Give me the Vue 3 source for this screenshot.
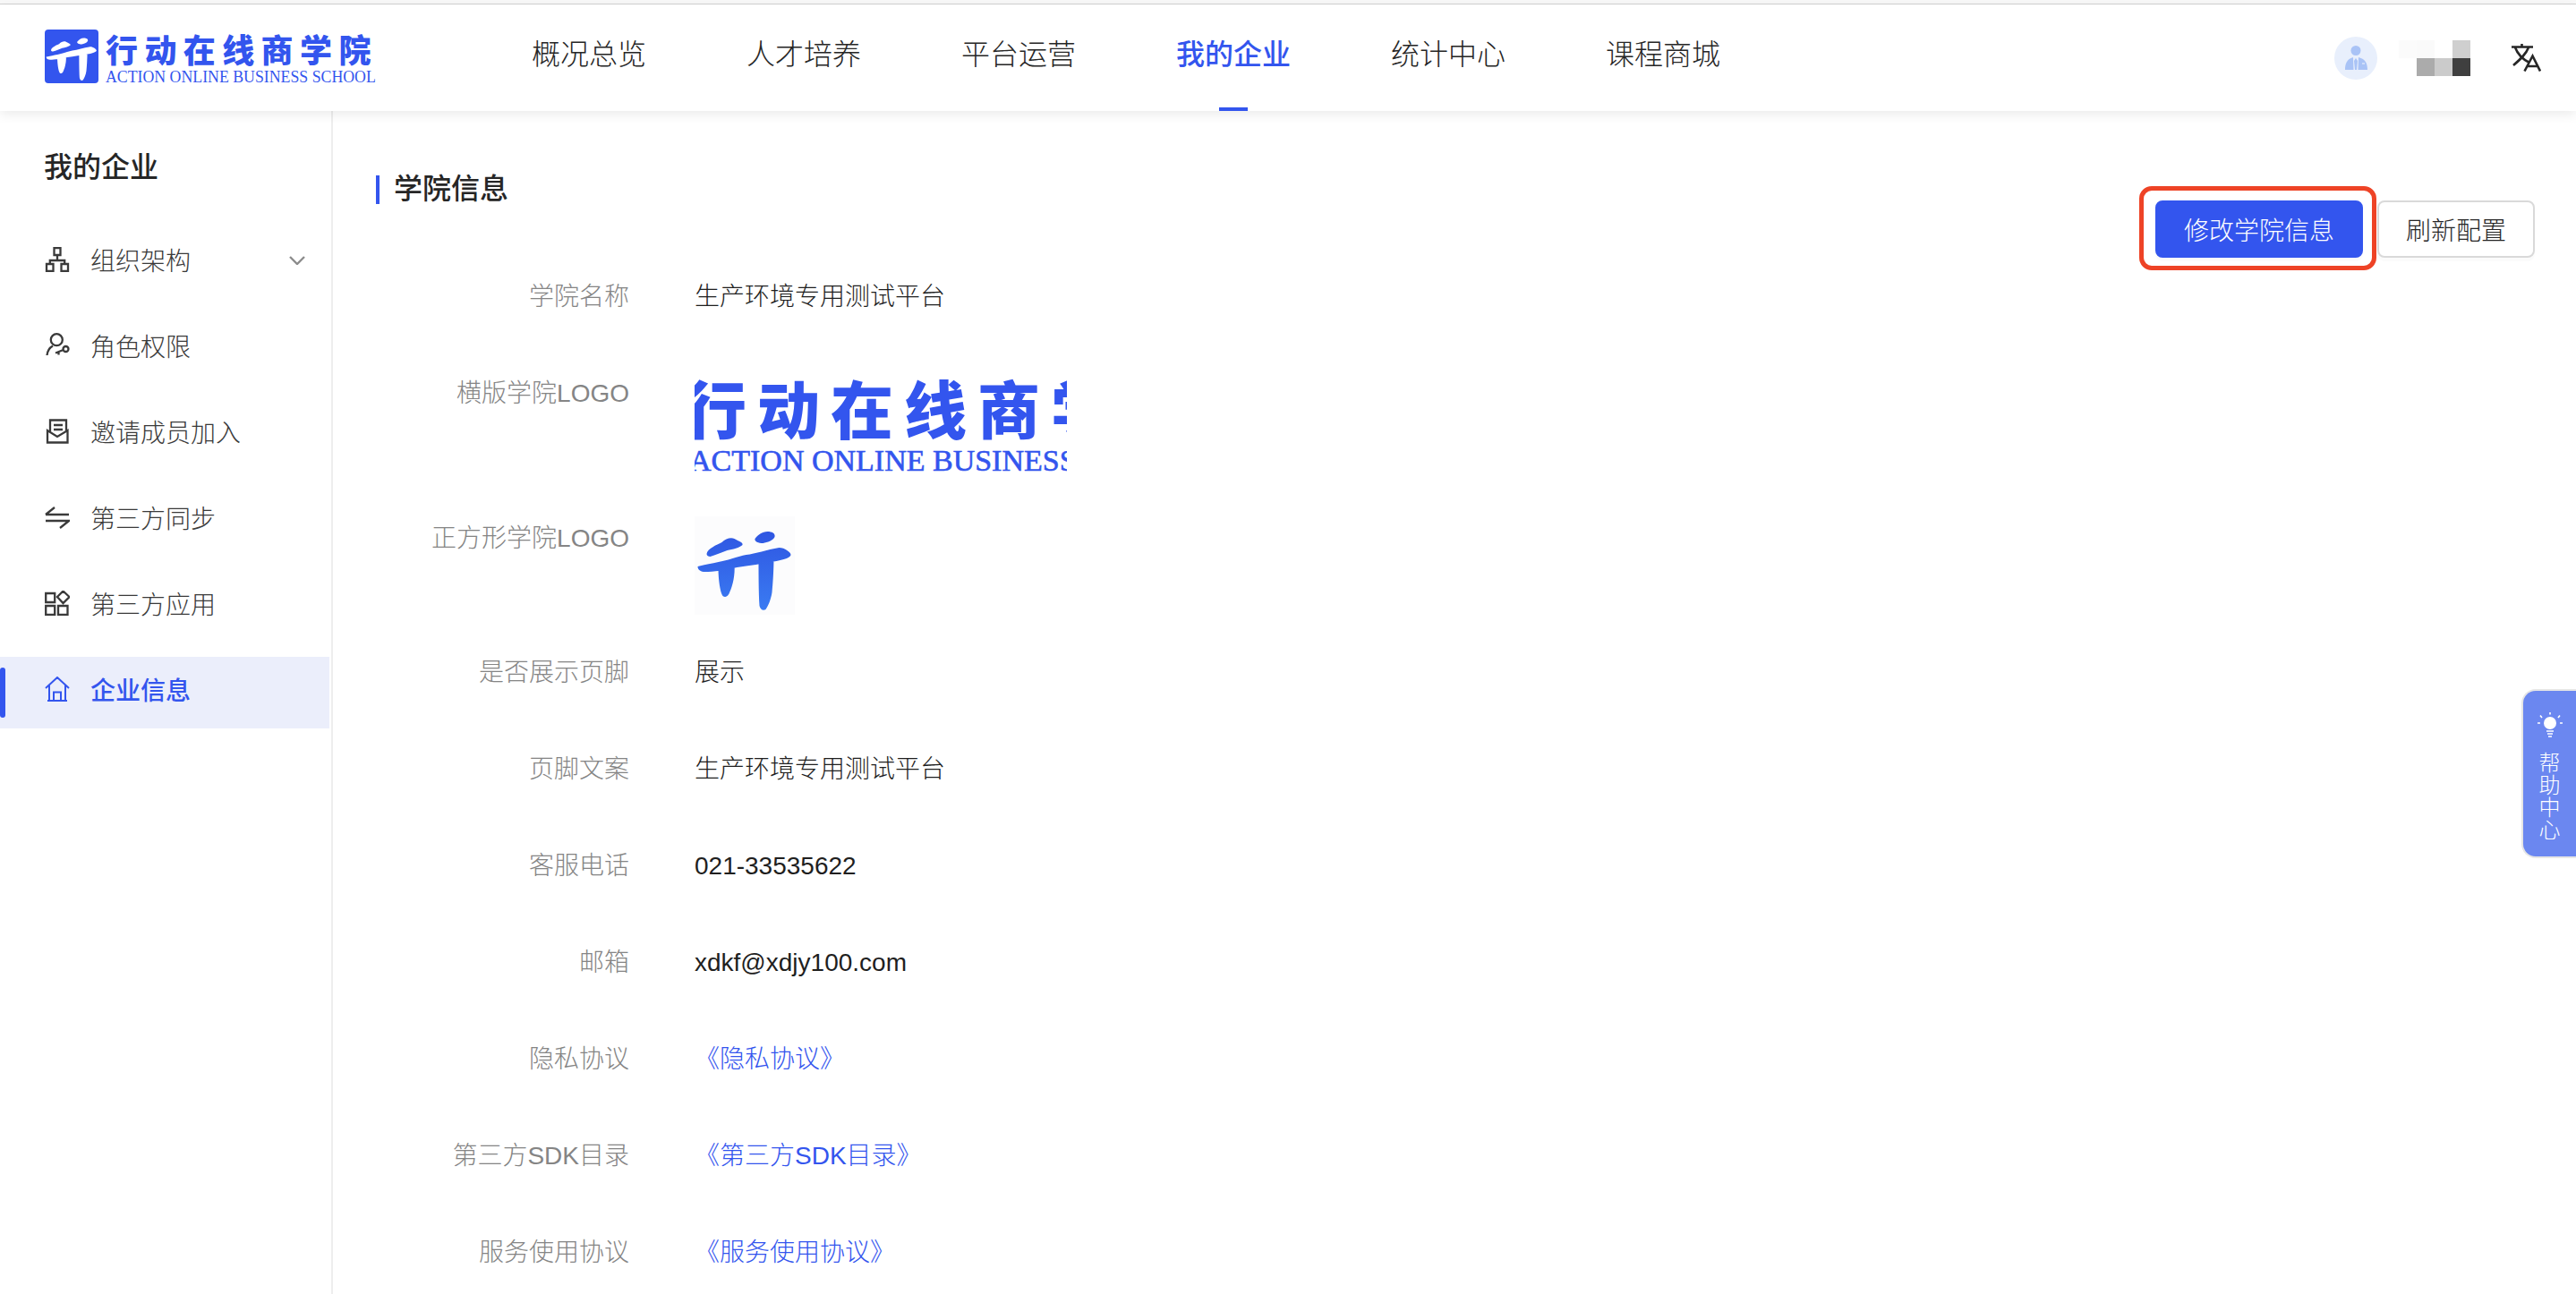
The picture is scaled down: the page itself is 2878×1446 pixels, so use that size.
<template>
  <div class="page">
    <div class="topline"></div>
    <header class="header">
      <div class="brand">
        <div class="brand-mark">
          <svg viewBox="0 0 111 110" class="brand-svg"><path :d="markPath" fill="#fff" /></svg>
        </div>
        <div class="brand-text">
          <div class="brand-cn">行动在线商学院</div>
          <div class="brand-en">ACTION ONLINE BUSINESS SCHOOL</div>
        </div>
      </div>
      <nav class="nav">
        <a v-for="n in navs" :key="n" class="nav-item" :class="{ active: n === '我的企业' }">{{ n }}</a>
      </nav>
      <div class="user">
        <svg class="avatar" viewBox="0 0 48 48">
          <circle cx="24" cy="24" r="24" fill="#e8effc" />
          <circle cx="24" cy="15.5" r="5.5" fill="#a9c3f6" />
          <path d="M12 37C12 30 14 25 21 23L21.5 37ZM37 37C37 30 35 25 27 23L26.5 37ZM24 24L26 27L25 37H23L22 27Z" fill="#a9c3f6" />
          <path d="M31 30H34" stroke="#e8effc" stroke-width="1.2" />
        </svg>
        <div class="blurred">
          <i v-for="(c, i) in cells" :key="i" :style="{ background: c }"></i>
        </div>
        <svg class="translate" viewBox="0 0 34 31" fill="none" stroke="#262626" stroke-width="2.6">
          <path d="M1 3.5H25M12.5 0V3.5M5 4C8 12 13 17 21 21M20 4C17 12 10 18 3 24" />
          <path d="M15.5 30.5L24.5 13.5L33 30.5M18 25H30.5" />
        </svg>
      </div>
    </header>
    <div class="body">
      <aside class="side">
        <h2 class="side-title">我的企业</h2>
        <div v-for="m in menus" :key="m.t" class="menu" :class="{ on: m.on }">
          <svg class="menu-icon" viewBox="0 0 28 28" fill="none" stroke="currentColor" :stroke-width="m.on ? 2 : 2.3"><path :d="m.d" /></svg>
          <span>{{ m.t }}</span>
          <svg v-if="m.arrow" class="chev" viewBox="0 0 18 10" fill="none" stroke="#8c8c8c" stroke-width="2.4"><path d="M1 1L9 9L17 1" /></svg>
        </div>
      </aside>
      <main class="main">
        <div class="head">
          <h1 class="title">学院信息</h1>
          <div class="actions">
            <div class="mark-wrap">
              <button class="btn primary">修改学院信息</button>
              <div class="red-box"></div>
            </div>
            <button class="btn">刷新配置</button>
          </div>
        </div>
        <div class="form">
          <div class="row"><label>学院名称</label><div class="val">生产环境专用测试平台</div></div>
          <div class="row">
            <label>横版学院LOGO</label>
            <div class="logo-wide">
              <div class="wide-cn">行动在线商学院</div>
              <div class="wide-en">ACTION ONLINE BUSINESS SCHOOL</div>
            </div>
          </div>
          <div class="row">
            <label>正方形学院LOGO</label>
            <div class="logo-square">
              <svg viewBox="0 0 111 110" class="square-svg">
                <defs><linearGradient id="mg" x1="0" y1="0" x2="0" y2="1"><stop offset="0" stop-color="#2f56e2" /><stop offset="1" stop-color="#3a7bf2" /></linearGradient></defs>
                <path :d="markPath" fill="url(#mg)" />
              </svg>
            </div>
          </div>
          <div v-for="r in rows" :key="r.l" class="row">
            <label>{{ r.l }}</label>
            <div class="val" :class="{ link: r.link }">{{ r.v }}</div>
          </div>
        </div>
      </main>
    </div>
    <div class="help">
      <svg class="bulb" viewBox="0 0 28 28" fill="none" stroke="#fff" stroke-width="1.6">
        <circle cx="14" cy="12" r="7" fill="#fff" stroke="none" />
        <path d="M14 0V2.5M3 3.5L5 6M25 3.5L23 6M0 12H3M25 12H28M10 21H18M11 24H17M12 27H16" />
      </svg>
      <div class="help-text">帮助中心</div>
    </div>
  </div>
</template>

<script setup>
const markPath =
  'M13 42C14 36 24 32 30 29C34 25 40 23 44 25C49 28 54 29 53 32C50 35 42 37 36 38C30 40 24 43 17 45C15 45 13 44 13 42Z' +
  'M67 25C70 21 75 17 81 17C86 17 90 19 89 23C87 27 81 29 76 30C71 30 66 28 67 25Z' +
  'M3 56C10 54 30 51 42 47C48 45 52 44 57 43C68 42 80 37 94 35C100 35 107 40 107 43C107 46 100 48 91 50C75 53 60 55 47 57C35 60 20 62 11 62C7 62 3 60 3 56Z' +
  'M26 58L44 54C45 65 42 78 39 84C37 90 34 91 31 89C28 85 26 70 26 58Z' +
  'M71 46L88 44C88 60 87 75 86 85C85 92 82 100 79 104C76 106 73 104 72 100C71 85 71 60 71 46Z'

const navs = ['概况总览', '人才培养', '平台运营', '我的企业', '统计中心', '课程商城']
const cells = ['#fbfbfb', '#fafafa', '#fff', '#cfcfcf', '#fff', '#ababab', '#cbcbcb', '#3f3f3f']
const menus = [
  { t: '组织架构', arrow: true, d: 'M10.5 1H17.5V9H10.5ZM2 19H9.5V27H2ZM18.5 19H26V27H18.5ZM14 9V15M5.8 19V15H22.2V19' },
  { t: '角色权限', d: 'M13.3 1.2A6.5 6.5 0 1 0 13.3 14.2A6.5 6.5 0 1 0 13.3 1.2ZM2.5 25C3 20 5.5 16.5 9 14.5M23.5 15A3 3 0 1 0 23.5 21A3 3 0 1 0 23.5 15ZM20.7 19L12 22.5M15.5 21V24.5' },
  { t: '邀请成员加入', d: 'M6 14V1.5H24V14M10 7H20M10 12H20M3 13V26.5H25.5V13L14 20Z' },
  { t: '第三方同步', d: 'M1 11H27M1 11L11 3M1 18H27L17 26' },
  { t: '第三方应用', d: 'M1.2 3H11.2V13H1.2ZM1.2 17H11.2V27H1.2ZM15 17H25.5V27H15ZM20.5 0.5L27.5 7L20.5 14L14 7Z' },
  { t: '企业信息', on: true, d: 'M1 13L14 1L27 13M5 10V27H23V10M10 27V17.5H18V27M3 27H25' }
]
const rows = [
  { l: '是否展示页脚', v: '展示' },
  { l: '页脚文案', v: '生产环境专用测试平台' },
  { l: '客服电话', v: '021-33535622' },
  { l: '邮箱', v: 'xdkf@xdjy100.com' },
  { l: '隐私协议', v: '《隐私协议》', link: true },
  { l: '第三方SDK目录', v: '《第三方SDK目录》', link: true },
  { l: '服务使用协议', v: '《服务使用协议》', link: true }
]
</script>

<style>
html, body { margin: 0; background: #fff; overflow: hidden; }
</style>

<style scoped>
.page {
  position: relative;
  width: 2878px;
  height: 1446px;
  overflow: hidden;
  background: #fff;
  font-family: "Liberation Sans", "Noto Sans CJK SC", sans-serif;
  font-size: 28px;
  font-weight: 300;
  color: #1f1f1f;
}
.topline { height: 4px; background: #f8f8f8; border-bottom: 1px solid #d2d2d2; }
.header {
  position: relative;
  z-index: 1;
  display: flex;
  align-items: center;
  height: 119px;
  background: #fff;
  box-shadow: 0 4px 12px rgba(0, 0, 0, 0.08);
}
.brand { display: flex; width: 594px; flex: none; padding-left: 50px; box-sizing: border-box; color: #3355ee; }
.brand-mark { width: 60px; height: 60px; border-radius: 4px; background: #3355ee; flex: none; }
.brand-svg { display: block; width: 60px; height: 60px; }
.brand-text { margin-left: 8px; padding-top: 2px; }
.brand-cn { font-family: "Noto Sans CJK SC", sans-serif; font-weight: 900; font-size: 36px; line-height: 38px; letter-spacing: 7.4px; }
.brand-en { font-family: "Liberation Serif", serif; font-weight: 400; font-size: 17.8px; line-height: 20px; white-space: nowrap; margin-top: 3px; }
.nav { display: flex; gap: 112px; align-self: flex-start; margin-top: 30px; }
.nav-item { position: relative; display: block; font-size: 32px; line-height: 46px; color: #262626; font-family: "Noto Sans CJK SC", sans-serif; }
.nav-item.active { color: #3355ee; font-weight: 500; }
.nav-item.active::after {
  content: "";
  position: absolute;
  left: 48px;
  bottom: -43px;
  width: 32px;
  height: 4px;
  background: #3355ee;
}
.user { margin-left: auto; display: flex; align-items: center; padding-right: 39px; }
.avatar { width: 48px; height: 48px; display: block; }
.blurred { display: grid; grid-template-columns: repeat(4, 20px); grid-auto-rows: 20px; margin-left: 24px; margin-right: 45px; }
.translate { width: 34px; height: 31px; display: block; }
.body { display: flex; height: 1322px; }
.side { width: 372px; box-sizing: border-box; border-right: 2px solid #eee; flex: none; }
.side-title { margin: 0 0 47px; padding: 37px 0 0 49px; font-size: 32px; line-height: 46px; font-weight: 500; color: #262626; font-family: "Noto Sans CJK SC", sans-serif; }
.menu { position: relative; display: flex; align-items: center; height: 80px; box-sizing: border-box; padding: 0 0 8px 50px; margin-bottom: 16px; margin-right: 2px; color: #3a3a3a; }
.menu-icon { width: 28px; height: 28px; flex: none; margin-right: 23px; }
.menu span { font-family: "Noto Sans CJK SC", sans-serif; }
.chev { position: absolute; left: 323px; top: 32px; width: 18px; height: 10px; }
.menu.on { background: #ebeefb; color: #3355ee; }
.menu.on span { font-weight: 500; }
.menu.on::before { content: ""; position: absolute; left: 0; top: 12px; width: 6px; height: 56px; border-radius: 3px; background: #3355ee; }
.main { flex: 1; padding: 72px 46px 0 48px; }
.head { display: flex; justify-content: space-between; height: 92px; }
.title { margin: 0; height: 32px; padding-left: 16px; border-left: 4px solid #3355ee; font-size: 32px; line-height: 24px; font-weight: 500; color: #262626; font-family: "Noto Sans CJK SC", sans-serif; }
.actions { display: flex; gap: 16px; margin-top: 28px; height: 64px; }
.mark-wrap { position: relative; }
.btn {
  display: block;
  height: 64px;
  padding: 0 30px;
  box-sizing: border-box;
  border: 2px solid #d9d9d9;
  border-radius: 8px;
  background: #fff;
  font: inherit;
  font-family: "Noto Sans CJK SC", sans-serif;
  color: #262626;
  box-shadow: 0 4px 0 rgba(0, 0, 0, 0.015);
}
.btn.primary { background: #3355ee; border-color: #3355ee; color: #fff; }
.red-box { position: absolute; left: -18px; right: -15px; top: -16px; bottom: -14px; border: 5px solid #ee4326; border-radius: 14px; box-sizing: border-box; }
.form { margin-top: 19px; }
.row { display: flex; min-height: 68px; margin-bottom: 40px; line-height: 44px; }
.row label { width: 283px; flex: none; text-align: right; color: #858585; margin-right: 73px; padding-top: 3px; }
.val { color: #1f1f1f; padding-top: 3px; }
.val.link { color: #3355ee; }
.logo-wide { width: 416px; height: 122px; overflow: hidden; color: #3355ee; }
.wide-cn { font-family: "Noto Sans CJK SC", sans-serif; font-weight: 900; font-size: 70px; line-height: 70px; letter-spacing: 12px; white-space: nowrap; margin: 5px 0 0 -12px; }
.wide-en { font-family: "Liberation Serif", serif; font-weight: 400; -webkit-text-stroke: 0.6px #3355ee; font-size: 34px; line-height: 34px; white-space: nowrap; margin: 8px 0 0 -6px; }
.logo-square { width: 112px; height: 110px; background: #fcfcfd; }
.square-svg { display: block; width: 112px; height: 110px; }
.help {
  position: absolute;
  right: 0;
  top: 770px;
  width: 61px;
  height: 189px;
  box-sizing: border-box;
  background: #6b87f0;
  border: 2px solid #e6e6e6;
  border-right: 0;
  border-radius: 16px 0 0 16px;
  display: flex;
  flex-direction: column;
  align-items: center;
  padding-top: 24px;
  color: #fff;
}
.bulb { width: 28px; height: 28px; flex: none; }
.help-text { width: 24px; font-size: 24px; line-height: 25px; margin-top: 14px; font-family: "Noto Sans CJK SC", sans-serif; }
</style>
